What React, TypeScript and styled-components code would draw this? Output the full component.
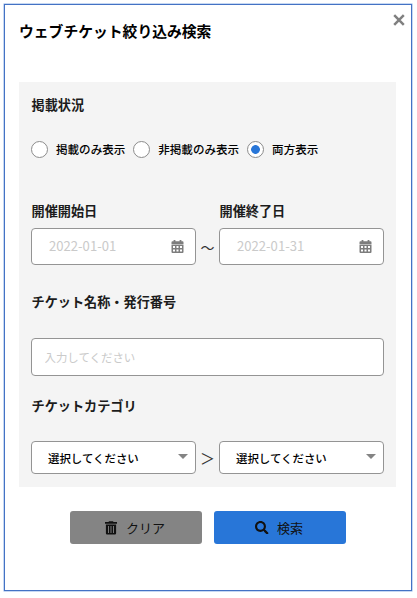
import React, { useState } from 'react';
import styled, { createGlobalStyle } from 'styled-components';
import { FaSearch } from 'react-icons/fa';

const GlobalStyle = createGlobalStyle`
  *, *::before, *::after { box-sizing: border-box; }
  body {
    margin: 0;
    background: #fff;
    color: #1c1c1c;
    font-family: "Noto Sans CJK JP", sans-serif;
  }
  input, button { font-family: inherit; }
`;

const Page = styled.div`
  height: 598px;
  padding: 4px 5px 7px 4px;
`;

const Dialog = styled.section`
  position: relative;
  height: 587px;
  padding: 14px 15px 0 14px;
  border: 1px solid #4472c4;
  box-shadow: 0 0 0 0.5px #8db0e6;
`;

const Title = styled.h1`
  margin: 0;
  height: 63px;
  font-size: 14.8px;
  line-height: 24px;
  font-weight: 700;
  color: #000;
`;

const CloseButton = styled.button`
  position: absolute;
  top: 9px;
  right: 6.5px;
  display: flex;
  padding: 0;
  border: 0;
  background: none;
`;

const Panel = styled.div`
  height: 405px;
  padding: 13px 12px 0 12px;
  background: #f4f4f4;
`;

const Heading = styled.h2<{ $above?: number; $gap: number }>`
  margin: ${(p) => p.$above ?? 0}px 0 ${(p) => p.$gap}px;
  padding-left: 0.5px;
  height: 20px;
  font-size: 13.15px;
  line-height: 20px;
  font-weight: 700;
  white-space: nowrap;
`;

const RadioRow = styled.div`
  display: flex;
  gap: 8px;
  height: 17px;
  margin-bottom: 43px;
`;

const RadioLabel = styled.label`
  display: flex;
  align-items: center;
  gap: 8px;
  font-size: 11.55px;
  line-height: 17px;
  font-weight: 500;
  color: #000;
  white-space: nowrap;
`;

const Radio = styled.input`
  appearance: none;
  width: 17px;
  height: 17px;
  margin: 0;
  border: 1px solid #8c8c8c;
  border-radius: 50%;
  background: #fff;
  &:checked {
    background: radial-gradient(circle, #2876d8 0 4px, #fff 4.7px);
  }
`;

const PairRow = styled.div`
  display: grid;
  grid-template-columns: 165px 23px 165px;
  align-items: end;
`;

const Joint = styled.span<{ $height: number; $size: number }>`
  height: ${(p) => p.$height}px;
  line-height: ${(p) => p.$height}px;
  font-size: ${(p) => p.$size}px;
  text-align: center;
  color: #333;
`;

const Field = styled.div<{ $height: number; $left: number; $right: number }>`
  display: flex;
  align-items: center;
  justify-content: space-between;
  height: ${(p) => p.$height}px;
  padding: 0 ${(p) => p.$right}px 0 ${(p) => p.$left}px;
  border: 1px solid #949494;
  border-radius: 4px;
  background: #fff;
  color: #7d7d7d;
`;

const TextInput = styled.input<{ $size: number; $lift: number }>`
  flex: 1;
  min-width: 0;
  height: 26px;
  padding: 0 0 ${(p) => p.$lift}px;
  border: 0;
  outline: 0;
  background: none;
  font-size: ${(p) => p.$size}px;
  &::placeholder { color: #cacaca; opacity: 1; }
`;

const SelectText = styled.span`
  font-size: 11.45px;
  line-height: 20px;
  font-weight: 500;
  color: #000;
`;

const Caret = styled.span`
  margin-bottom: 2px;
  border: 5px solid transparent;
  border-top: 5.5px solid #848484;
  border-bottom: 0;
`;

const Actions = styled.div`
  display: flex;
  justify-content: center;
  gap: 12px;
  margin-top: 24px;
`;

const ActionButton = styled.button<{ $color: string; $inset: number }>`
  display: flex;
  align-items: center;
  gap: 8px;
  width: 132px;
  height: 33px;
  padding: 0 0 0 ${(p) => p.$inset}px;
  border: 0;
  border-radius: 3px;
  background: ${(p) => p.$color};
  color: #111;
  font-size: 13px;
  line-height: 20px;
`;

const IconSlot = styled.span`
  display: flex;
  width: 14px;
  justify-content: center;
`;

const statuses = ['掲載のみ表示', '非掲載のみ表示', '両方表示'];

function CalendarIcon() {
  return (
    <svg width="13" height="13" viewBox="0 0 13 13" fill="#7d7d7d">
      <path d="M2.6 0h1.8v1.3h4.2V0h1.8v1.3h1.2Q12.500 1.300 12.500 2.300V3.900H.5V2.300Q.5 1.300 1.500 1.300H2.600Z" />
      <path
        fillRule="evenodd"
        d="M.5 4.500h12V12q0 1-1 1h-10q-1 0-1-1ZM2 6v2h2V6ZM5.500 6v2h2V6ZM9 6v2h2V6ZM2 9.500v2h2v-2ZM5.500 9.500v2h2v-2ZM9 9.500v2h2v-2Z"
      />
    </svg>
  );
}

function TrashIcon() {
  return (
    <svg width="12" height="14" viewBox="0 0 12 14" fill="#111">
      <path d="M4 .3h4l.5.8H12v1.700H0V1.100h3.500Z" />
      <path
        fillRule="evenodd"
        d="M.9 3.500h10.200v8.700q0 1.300-1.300 1.300H2.200Q.9 13.500.9 12.200ZM3 5v7h.9V5ZM5.550 5v7h.9V5ZM8.100 5v7h.9V5Z"
      />
    </svg>
  );
}

function DateField({ label, placeholder }: { label: string; placeholder: string }) {
  return (
    <div>
      <Heading $gap={7}>{label}</Heading>
      <Field $height={37} $left={17} $right={11.5}>
        <TextInput $size={13.1} $lift={3} placeholder={placeholder} aria-label={label} />
        <CalendarIcon />
      </Field>
    </div>
  );
}

function CategorySelect() {
  return (
    <Field $height={33} $left={16} $right={7.5} role="combobox" tabIndex={0}>
      <SelectText>選択してください</SelectText>
      <Caret />
    </Field>
  );
}

export default function App() {
  const [status, setStatus] = useState('両方表示');
  return (
    <Page>
      <GlobalStyle />
      <Dialog>
        <CloseButton aria-label="閉じる">
          <svg width="12" height="12" viewBox="0 0 12 12" stroke="#808080" strokeWidth="2.5">
            <path d="M1.2 1.2 10.8 10.8M10.8 1.2 1.2 10.8" />
          </svg>
        </CloseButton>
        <Title>ウェブチケット絞り込み検索</Title>
        <Panel>
          <Heading $gap={26}>掲載状況</Heading>
          <RadioRow>
            {statuses.map((s) => (
              <RadioLabel key={s}>
                <Radio type="radio" name="status" checked={status === s} onChange={() => setStatus(s)} />
                {s}
              </RadioLabel>
            ))}
          </RadioRow>
          <PairRow>
            <DateField label="開催開始日" placeholder="2022-01-01" />
            <Joint $height={36} $size={14}>～</Joint>
            <DateField label="開催終了日" placeholder="2022-01-31" />
          </PairRow>
          <Heading $above={27} $gap={26}>チケット名称・発行番号</Heading>
          <Field $height={38} $left={12.5} $right={12}>
            <TextInput $size={11.45} $lift={1} placeholder="入力してください" />
          </Field>
          <Heading $above={20} $gap={25}>チケットカテゴリ</Heading>
          <PairRow>
            <CategorySelect />
            <Joint $height={32} $size={15}>＞</Joint>
            <CategorySelect />
          </PairRow>
        </Panel>
        <Actions>
          <ActionButton $color="#848484" $inset={34.5}>
            <IconSlot><TrashIcon /></IconSlot>
            クリア
          </ActionButton>
          <ActionButton $color="#2876d8" $inset={41.5}>
            <IconSlot><FaSearch size={13.5} /></IconSlot>
            検索
          </ActionButton>
        </Actions>
      </Dialog>
    </Page>
  );
}
